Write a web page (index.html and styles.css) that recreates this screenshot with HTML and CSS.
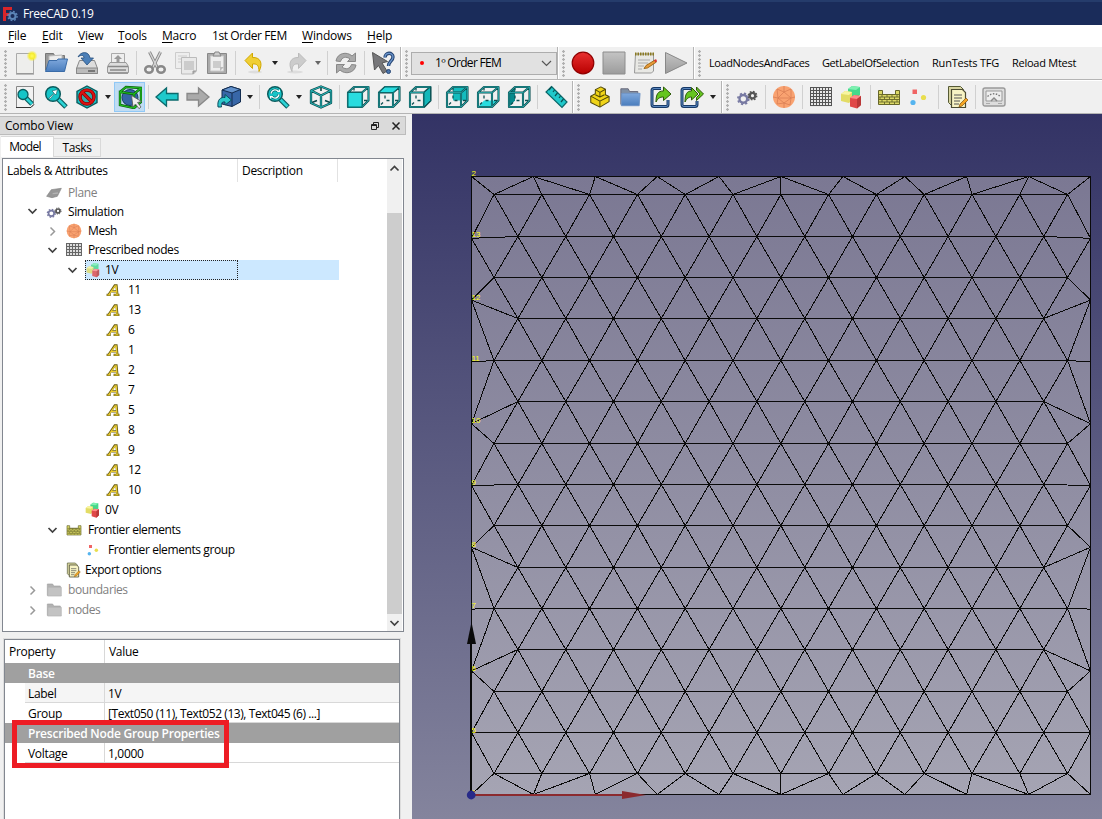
FILE: index.html
```html
<!DOCTYPE html>
<html lang="en">
<head>
<meta charset="utf-8">
<title>FreeCAD 0.19</title>
<link rel="stylesheet" href="styles.css">
</head>
<body>
<svg class="defs" aria-hidden="true">
  <defs>
    <linearGradient id="gTeal" x1="0" y1="0" x2="1" y2="1"><stop offset="0" stop-color="#34e0e2"/><stop offset="1" stop-color="#06989a"/></linearGradient>
    <linearGradient id="gBlue" x1="0" y1="0" x2="0" y2="1"><stop offset="0" stop-color="#7fa8dc"/><stop offset="1" stop-color="#4a7dbd"/></linearGradient>
    <linearGradient id="gGrey" x1="0" y1="0" x2="0" y2="1"><stop offset="0" stop-color="#c4c4c4"/><stop offset="1" stop-color="#9c9c9c"/></linearGradient>
    <linearGradient id="gRed" x1="0" y1="0" x2="0" y2="1"><stop offset="0" stop-color="#e83030"/><stop offset="1" stop-color="#b80000"/></linearGradient>
    <linearGradient id="gSky" x1="0" y1="0" x2="0" y2="1"><stop offset="0" stop-color="#333365"/><stop offset="1" stop-color="#84849d"/></linearGradient>
    <linearGradient id="gFace" x1="0" y1="0" x2="0" y2="1"><stop offset="0" stop-color="#7b7893"/><stop offset="1" stop-color="#a5a4b3"/></linearGradient>
    <radialGradient id="gSun"><stop offset="0" stop-color="#fffb60"/><stop offset=".5" stop-color="#f6ec30"/><stop offset="1" stop-color="#f6ec30" stop-opacity="0"/></radialGradient>
  </defs>
  <symbol id="new" viewBox="0 0 24 24"><path d="M3.500 2.500h17v20h-17z" fill="#eeeeec" stroke="#aaa"/><path d="M3 23h18" stroke="#888"/><circle cx="19" cy="5" r="5.500" fill="url(#gSun)"/></symbol>
  <symbol id="open" viewBox="0 0 24 24"><path d="M1.500 19V2.500h8l1 2h10V20z" fill="#999" stroke="#777"/><path d="M5 5l13-1v8H5z" fill="#eee" stroke="#bbb"/><path d="M1.500 20.500L5 9.500h8l1-1.500h9.500l-3 12.500z" fill="url(#gBlue)" stroke="#3b6ca8"/></symbol>
  <symbol id="save" viewBox="0 0 24 24"><path d="M4.500 9.500h15l3 8v5h-21v-5z" fill="#ddd" stroke="#888"/><path d="M1.500 17h21v5.500h-21z" fill="#bbb" stroke="#888"/><path d="M13 20h7" stroke="#777" stroke-width="2"/><path d="M3 6C6 0 14 0 15 7h3.500L12 14 6 7h3C9 4 6 3.500 3 6z" fill="#4b7fb8" stroke="#28507f" stroke-width=".8"/></symbol>
  <symbol id="print" viewBox="0 0 24 24"><path d="M5.500 13V2.500h13V13" fill="#eee" stroke="#aaa"/><path d="M12 4l4 4h-2.500v4h-3V8H8z" fill="#999"/><path d="M4 11.500h16l2.500 4v6h-21v-6z" fill="#ddd" stroke="#999"/><path d="M2 15.500h20M4 19h16" stroke="#888" stroke-width="1.500"/><path d="M2 22.500h20" stroke="#999"/></symbol>
  <symbol id="cut" viewBox="0 0 24 24"><path d="M6.500 1l8 16M17.500 1l-8 16" stroke="#888" stroke-width="3"/><path d="M6.500 1l8 16M17.500 1l-8 16" stroke="#d8d8d8" stroke-width="1.300"/><g fill="none" stroke="#888" stroke-width="2.500"><ellipse cx="6" cy="18.500" rx="3.800" ry="3.300"/><ellipse cx="18" cy="18.500" rx="3.800" ry="3.300"/></g></symbol>
  <symbol id="copy" viewBox="0 0 24 24"><path d="M1.500 1.500h14v16h-14z" fill="#eee" stroke="#ccc"/><path d="M4 5h9M4 8h9M4 11h9" stroke="#ccc"/><path d="M7.500 6.500h15V20l-3 3H7.500z" fill="#e9e9e9" stroke="#bbb"/><path d="M10 10h10v9H10z" fill="#ccc"/><path d="M19 23v-3h3" fill="#aaa" stroke="#999"/></symbol>
  <symbol id="paste" viewBox="0 0 24 24"><path d="M2.500 2.500h19v20h-19z" fill="#aaa" stroke="#888"/><path d="M5.500 5h13v15h-13z" fill="#eee" stroke="#ccc"/><path d="M8 10h8v7H8z" fill="#ccc"/><path d="M8 5l2-4h4l2 4z" fill="#ccc" stroke="#888"/><path d="M15 20v-4h4" fill="#bbb"/></symbol>
  <symbol id="undo" viewBox="0 0 24 24"><ellipse cx="13" cy="21" rx="7" ry="1.500" fill="#ddd"/><path d="M3 9.500L10.500 2v4.500C18 6 21.500 12 17 20.500c0-6-2-8-6.500-7.500v4.500z" fill="#f0cf35" stroke="#d1a800"/></symbol>
  <symbol id="redo" viewBox="0 0 24 24"><ellipse cx="10" cy="21" rx="8" ry="1.500" fill="#ddd"/><path d="M21 9.500L13.500 2v4.500C6 6 2.500 12 7 20.500c0-6 2-8 6.500-7.500v4.500z" fill="#ccc" stroke="#bbb"/></symbol>
  <symbol id="refresh" viewBox="0 0 24 24"><g fill="#aaa" stroke="#888"><path d="M2 10C3 2 13 0 18 5l3.500-3v8.500h-8L16 8C12 5 8 6 6.500 10.500z"/><path d="M22 14c-1 8-11 10-16 5l-3.500 3v-8.500h8L8 16c4 3 8 2 9.500-2.500z"/></g></symbol>
  <symbol id="help" viewBox="0 0 24 24"><path d="M1.500 1.500l15 9-5.500 1.500 5 8-4 2.500-4.500-8-4 4.500z" fill="#77777a" stroke="#555"/><path d="M14 6.500C14 1 22 1 22 6c0 4-4.500 4-4.500 9" fill="none" stroke="#274674" stroke-width="3.400"/><path d="M14 6.500C14 1 22 1 22 6c0 4-4.500 4-4.500 9" fill="none" stroke="#6a95cc" stroke-width="1.300"/><circle cx="17.500" cy="20.500" r="2" fill="#4a75ac" stroke="#274674"/></symbol>
  <symbol id="record" viewBox="0 0 24 24"><circle cx="12" cy="12" r="10.800" fill="url(#gRed)" stroke="#8f0000" stroke-width="1.200"/></symbol>
  <symbol id="stop" viewBox="0 0 24 24"><path d="M1 1h22v22H1z" fill="url(#gGrey)" stroke="#8c8c8c"/></symbol>
  <symbol id="notes" viewBox="0 0 24 24"><path d="M2.500 3h18v17l-2 2h-17z" fill="#e8e8e4" stroke="#999"/><path d="M2 3h19" stroke="#8a7a20" stroke-width="3" stroke-dasharray="1.500 1"/><path d="M5 9h12M5 12h10M5 15h6M5 18h4" stroke="#aaa"/><path d="M11 17.500l2-3L22 9l1.500 2-9 6z" fill="#e89a3a" stroke="#8f5902" stroke-width=".8"/><path d="M21 9.500l2-1.500 1 2-1.500 1.500z" fill="#d33"/></symbol>
  <symbol id="play" viewBox="0 0 24 24"><path d="M1.500 1.500L23 12 1.500 22.500z" fill="url(#gGrey)" stroke="#888"/></symbol>
  <symbol id="fitall" viewBox="0 0 24 24"><path d="M3.500 1.500h17v18l-3 3h-14z" fill="#f2f2f2" stroke="#888"/><path d="M3 22.500h15l3-3" stroke="#333" fill="none"/><path d="M13 13l6 6" stroke="#0b5c5e" stroke-width="5"/><path d="M13 13l6 6" stroke="#2cd3d5" stroke-width="2.600"/><circle cx="10" cy="9.500" r="5" fill="#16c5c8" stroke="#0b5c5e" stroke-width="1.300"/></symbol>
  <symbol id="fitsel" viewBox="0 0 24 24"><path d="M14 14l8 8" stroke="#0b5c5e" stroke-width="5"/><path d="M14 14l7.500 7.500" stroke="#2cd3d5" stroke-width="2.600"/><circle cx="9" cy="9" r="7.300" fill="#16c5c8" stroke="#0b5c5e" stroke-width="1.500"/><path d="M4.500 13.500L10 8 8 6l5.500-1.500L12 10l-1.500-1.500L6 14z" fill="#fff" stroke="#0b5c5e" stroke-width=".6"/></symbol>
  <symbol id="style" viewBox="0 0 24 24"><path d="M12 1l10 5.500v11L12 23 2 17.500v-11z" fill="#16c5c8" stroke="#0b5c5e" stroke-width="1.400"/><circle cx="12" cy="12" r="7" fill="#3aa" stroke="#800" stroke-width="3.500"/><path d="M7 7l10 10" stroke="#800" stroke-width="3.500"/><circle cx="12" cy="12" r="7" fill="none" stroke="#d11" stroke-width="2"/><path d="M7 7l10 10" stroke="#d11" stroke-width="2"/></symbol>
  <symbol id="bound" viewBox="0 0 24 24"><circle cx="12" cy="12.500" r="8" fill="#3565a5" stroke="#173963"/><g fill="none" stroke="#0a5c0a" stroke-width="2.400"><path d="M2 7l14 2v14L2 20zM2 7l6-5 15 1-7 6M23 3v14l-7 6"/></g><g fill="none" stroke="#21c021" stroke-width="1.200"><path d="M2 7l14 2v14L2 20zM2 7l6-5 15 1-7 6M23 3v14l-7 6"/></g><path d="M13.500 10.500l10 6-4 1 3.500 4.500-2 1.700-3.500-4.700-2.500 3z" fill="#eee" stroke="#555" stroke-width=".8"/></symbol>
  <symbol id="left" viewBox="0 0 24 24"><path d="M1 12L11.500 3v5.500H23v6.500H11.500v6z" fill="#1fc9cb" stroke="#0b6a6c" stroke-width="1.300"/></symbol>
  <symbol id="right" viewBox="0 0 24 24"><path d="M23 12L12.500 3v5.500H1v6.500h11.500v6z" fill="#aaa" stroke="#888" stroke-width="1.300"/></symbol>
  <symbol id="navcube" viewBox="0 0 24 24"><path d="M5 5l9-3.500 9.500 3V17L15 21.500 5 19z" fill="#3867a8" stroke="#132d50"/><path d="M5 5l10 3 8.500-3.500L14 1.500z" fill="#6392cc" stroke="#132d50"/><path d="M15 8v13.500" stroke="#132d50"/><path d="M1 22c-1-8 3-10 7-9.500v-3L14.500 15 8 20v-3c-3-.5-4 1-3.500 5z" fill="#2cc8cc" stroke="#0b4c5e"/></symbol>
  <symbol id="zoom" viewBox="0 0 24 24"><path d="M14 14l8 8" stroke="#0b5c5e" stroke-width="5"/><path d="M14 14l7.500 7.500" stroke="#2cd3d5" stroke-width="2.600"/><circle cx="9" cy="9" r="7.300" fill="#16c5c8" stroke="#0b5c5e" stroke-width="1.500"/><path d="M5 8.500C6 4 11 4 12.500 7M13 9.500C12 14 7 14 5.500 11" fill="none" stroke="#0b5c5e" stroke-width="2.600"/><path d="M5 8.500C6 4 11 4 12.500 7M13 9.500C12 14 7 14 5.500 11" fill="none" stroke="#eaffff" stroke-width="1.300"/><path d="M11 7h3V4zM7 11H4v3z" fill="#fff"/></symbol>
  <symbol id="iso" viewBox="0 0 24 24"><g fill="none" stroke="#0b4648" stroke-width="2.300" stroke-linejoin="round"><path d="M12 1.500l10 4v12.500l-10 4.500L2 18V5.500zM2 5.500l10 5 10-5M12 10.500v12"/><path d="M12 2v4M3 17.500l5-2M21 17.500l-5-2" stroke-width="1.600"/></g><g fill="none" stroke="#27b5b7" stroke-width="1.100"><path d="M12 1.500l10 4v12.500l-10 4.500L2 18V5.500zM2 5.500l10 5 10-5M12 10.500v12"/></g></symbol>
  <symbol id="wire" viewBox="0 0 24 24"><g fill="none" stroke="#0b5052" stroke-width="2.100" stroke-linejoin="round"><path d="M2 7.500h14V22H2zM2 7.500l6-5.500h14.500l-6.500 5.500M22.500 2v13.500L16 22"/><path d="M8 3v2.500M8 10.500v3M9.500 15.500h3M6 17.500l-2 2M18 15.500h3" stroke-width="1.300"/></g><path d="M2 7.500h14V22H2zM2 7.500l6-5.500h14.500l-6.500 5.500M22.500 2v13.500L16 22" fill="none" stroke="#27a5a7" stroke-width=".9"/></symbol>
  <symbol id="front" viewBox="0 0 24 24"><use href="#wire"/><path d="M2 7.500h14V22H2z" fill="#29dcdf" stroke="#0b6668"/></symbol>
  <symbol id="top" viewBox="0 0 24 24"><use href="#wire"/><path d="M2 7.500l6-5.500h14.500L16 7.500z" fill="#29dcdf" stroke="#0b6668"/></symbol>
  <symbol id="rside" viewBox="0 0 24 24"><use href="#wire"/><path d="M16 7.500L22.500 2v13.500L16 22z" fill="#14b8ba" stroke="#0b5658"/></symbol>
  <symbol id="rear" viewBox="0 0 24 24"><path d="M8 2h14.500v13.500H8z" fill="#14bcbe"/><use href="#wire"/></symbol>
  <symbol id="bottom" viewBox="0 0 24 24"><path d="M2 22l6-6.500h14.500L16 22z" fill="#29dcdf"/><use href="#wire"/></symbol>
  <symbol id="lside" viewBox="0 0 24 24"><path d="M2 7.500L8 2v13.500L2 22z" fill="#078a8c"/><use href="#wire"/></symbol>
  <symbol id="ruler" viewBox="0 0 24 24"><path d="M7.500 1.500L23 17l-5 5.500L2 7z" fill="#20c8ca" stroke="#0b6668" stroke-width="1.200"/><path d="M7.500 2L5 5M10.500 5L9 7M13.500 8L11 11M16.500 11L15 13M19.500 14L17 17" stroke="#0b5254" stroke-width="1.200"/></symbol>
  <symbol id="part" viewBox="0 0 24 24"><g fill="#f0d418" stroke="#504808" stroke-width="1.100" stroke-linejoin="round"><path d="M3 11l5-2.500V4l6-3 5 2.500v6l4 2V17l-10 6-10-5z"/><path d="M8 4l5 3v5l-5-2.500M13 7l6-3.500M13 12l5-2.500M3 11l10 5.500V23M13 16.500l10-5" fill="none"/></g></symbol>
  <symbol id="folder" viewBox="0 0 24 24"><path d="M2 20V3h8l1.500 3h9v13z" fill="#8090a5" stroke="#667"/><path d="M3 8h20l-1 13.500H2.500z" fill="url(#gBlue)" stroke="#6d93c5"/></symbol>
  <symbol id="link" viewBox="0 0 24 24"><path d="M12 3.500H5q-2 0-2 2v14q0 2 2 2h12q2 0 2-2V15" fill="none" stroke="#173a68" stroke-width="3"/><path d="M12 3.500H5q-2 0-2 2v14q0 2 2 2h12q2 0 2-2V15" fill="none" stroke="#5a86bd" stroke-width="1"/><path d="M7 17C7 9 9 6 14.500 6V2L22 9l-7.500 6.500V12C11 12 9 13 7 17z" fill="#65c51f" stroke="#2d5a08"/></symbol>
  <symbol id="links" viewBox="0 0 24 24"><path d="M11 3.500H4q-2 0-2 2v14q0 2 2 2h11q2 0 2-2V16" fill="none" stroke="#173a68" stroke-width="3"/><path d="M11 3.500H4q-2 0-2 2v14q0 2 2 2h11q2 0 2-2V16" fill="none" stroke="#5a86bd" stroke-width="1"/><path d="M5 17C5 9 7 6 11.500 6V2.500L18 9l-6.500 6V12C9 12 7 13 5 17zM16.500 2l7 7-7 6.500v-3L20 9l-3.500-4z" fill="#65c51f" stroke="#2d5a08"/></symbol>
  <symbol id="gears" viewBox="0 0 24 24"><g fill="none"><circle cx="8" cy="14" r="4.200" stroke="#7779a2" stroke-width="2.600"/><circle cx="8" cy="14" r="6" stroke="#7779a2" stroke-width="1.800" stroke-dasharray="2.400 2.310"/><circle cx="18" cy="10.500" r="3" stroke="#555" stroke-width="2.600"/><circle cx="18" cy="10.500" r="4.600" stroke="#555" stroke-width="1.500" stroke-dasharray="1.800 1.810"/></g></symbol>
  <symbol id="mesh" viewBox="0 0 24 24"><circle cx="12" cy="12" r="11" fill="#f9a270"/><path d="M5 4l7 3 7-3M12 1v6l-6 6 6 5 7-5-7-6M1 12l5 1-1 6 7-1 6 2 1-7 4-1M5 4l1 9M19 4v9M12 18v5M6 13h13" fill="none" stroke="#d97f55" stroke-width=".8"/></symbol>
  <symbol id="grid" viewBox="0 0 24 24"><path d="M1 2h22v20H1z" fill="#e8e8e8"/><path d="M1 2.500h22M1 5.500h22M1 8.500h22M1 11.500h22M1 14.500h22M1 17.500h22M1 20.500h22M1.500 2v19M4.500 2v19M7.500 2v19M10.500 2v19M13.500 2v19M16.500 2v19M19.500 2v19M22.500 2v19" stroke="#555" stroke-width="1"/></symbol>
  <symbol id="grid-small" viewBox="0 0 16 16"><path d="M0 1h16v13H0z" fill="#ddd"/><path d="M0 1.500h16M0 4.500h16M0 7.500h16M0 10.500h16M0 13.500h16M.5 1v13M3.500 1v13M6.500 1v13M9.500 1v13M12.500 1v13M15.500 1v13" stroke="#666"/></symbol>
  <symbol id="blocks" viewBox="0 0 24 24"><path d="M8 4l4-3 8 1v8l-4 3-8-2z" fill="#45d88a"/><path d="M8 4l8 1 4-3-8-1z" fill="#7df0b0"/><path d="M1 9l4-3 7 1v8l-3 3-8-2z" fill="#e3dc65"/><path d="M1 9l8 1 3-3-7-1z" fill="#f8f5a0"/><path d="M10 13l4-3 7 1v9l-4 3.500-7-2z" fill="#e04848"/><path d="M10 13l7 1 4-3-7-1z" fill="#ff8a8a"/><path d="M17 14l4-3v9l-4 3.500z" fill="#b93838"/></symbol>
  <symbol id="wall" viewBox="0 0 24 24"><path d="M1.500 5.500h4v4h13v-4h4v14h-21z" fill="#dbd866" stroke="#66662a"/><path d="M2 9.500h20M2 12h20M2 14.500h20M2 17h20M5 9.500V12M10 9.500V12M15 9.500V12M20 9.500V12M3 12v2.500M7.500 12v2.500M12.500 12v2.500M17.500 12v2.500M5 14.500V17M10 14.500V17M15 14.500V17M20 14.500V17M7.500 17v2M12.500 17v2M17.500 17v2" stroke="#66662a" stroke-width=".9"/></symbol>
  <symbol id="dots" viewBox="0 0 24 24"><path d="M4.500 4.500H9V9H4.500z" fill="#f06464"/><circle cx="15.500" cy="12.500" r="2.600" fill="#e9de4e"/><circle cx="5" cy="17.500" r="2.600" fill="#55b4ef"/></symbol>
  <symbol id="export" viewBox="0 0 24 24"><path d="M3.500 1.500h12l3 3V19l-2 1.500h-10l-3-3z" fill="#d8d5a0" stroke="#555a35"/><path d="M6.500 4.500h11l3 3v15h-14z" fill="#f7f3c3" stroke="#4c4c33" stroke-width="1.200"/><path d="M9 10h8M9 13h8M9 16h6M9 19h5" stroke="#555"/><path d="M14 22l1-3 6-6 2 2-6 6z" fill="#f5a623" stroke="#805010" stroke-width=".7"/></symbol>
  <symbol id="meter" viewBox="0 0 24 24"><rect x="1" y="3" width="22" height="18" rx="2" fill="#ddd" stroke="#999" stroke-width="1.400"/><path d="M4 6h16v10H4z" fill="#eee" stroke="#999"/><path d="M5.500 11.500Q12 6 18.500 11.500" fill="none" stroke="#777" stroke-width="1.400" stroke-dasharray="1.500 1.500"/><path d="M9 16l3-3 3 3" stroke="#888" fill="none" stroke-width="1.500"/><path d="M4 18.500h4M16 18.500h4" stroke="#aaa"/></symbol>
  <symbol id="plane" viewBox="0 0 24 24"><path d="M1 17L8 7l15-2-6 12-8 2z" fill="#8c8c8c" stroke="#777"/><path d="M10 13l8-1" stroke="#aaa" stroke-width="2"/></symbol>
  <symbol id="note" viewBox="0 0 24 24"><path d="M1 20.500h7M13 20.500h10M4.500 20L15 4h3l1.500 16M10 14.500h8" fill="none" stroke="#6a5c10" stroke-width="3.800"/><path d="M2 20.500h5M14 20.500h8M5 20L15.500 5h2l1.500 15M10 14.500h8" fill="none" stroke="#ecce32" stroke-width="2"/></symbol>
  <symbol id="gfolder" viewBox="0 0 24 24"><path d="M2 20V3h8l1.500 3h10v13z" fill="#aaa" stroke="#999"/><path d="M3 8h20v13H2.500z" fill="#bdbdbd" stroke="#aaa"/></symbol>
  <symbol id="down" viewBox="0 0 11 11"><path d="M1.500 3l4 4 4-4" fill="none" stroke="#404040" stroke-width="1.700"/></symbol>
  <symbol id="next" viewBox="0 0 11 11"><path d="M3.500 1.500l4 4-4 4" fill="none" stroke="#999" stroke-width="1.500"/></symbol>
</svg>

<header class="titlebar">
  <svg class="logo" viewBox="0 0 16 16"><path d="M1 1h9v3H4v3h4v3H4v5H1z" fill="#d9252a"/><circle cx="10.500" cy="10" r="3" fill="none" stroke="#5c85b8" stroke-width="2"/><circle cx="10.500" cy="10" r="4.600" fill="none" stroke="#5c85b8" stroke-width="1.400" stroke-dasharray="1.800 1.800"/></svg>
  <span>FreeCAD 0.19</span>
</header>
<nav class="menubar">
  <span class="m1"><u>F</u>ile</span><span class="m2"><u>E</u>dit</span><span class="m3"><u>V</u>iew</span><span class="m4"><u>T</u>ools</span><span class="m5"><u>M</u>acro</span><span class="m6">1st Order FEM</span><span class="m7"><u>W</u>indows</span><span class="m8"><u>H</u>elp</span>
</nav>

<div class="toolbar">
  <div class="group g-file"><i class="grip"></i>
    <b><svg><use href="#new"/></svg></b><b><svg><use href="#open"/></svg></b><b><svg><use href="#save"/></svg></b><b><svg><use href="#print"/></svg></b><i class="sep"></i>
    <b><svg><use href="#cut"/></svg></b><b><svg><use href="#copy"/></svg></b><b><svg><use href="#paste"/></svg></b><i class="sep"></i>
    <b><svg><use href="#undo"/></svg></b><i class="caret"></i><b><svg><use href="#redo"/></svg></b><i class="caret dim"></i><i class="sep"></i>
    <b><svg><use href="#refresh"/></svg></b><i class="sep"></i><b><svg><use href="#help"/></svg></b>
  </div>
  <div class="group g-bench"><i class="grip"></i>
    <div class="combo"><i class="bullet"></i><span>1º Order FEM</span><svg class="chev" viewBox="0 0 11 11"><path d="M1 3l4.500 4.500L10 3" fill="none" stroke="#555" stroke-width="1.200"/></svg></div>
  </div>
  <div class="group g-macro"><i class="grip"></i>
    <b><svg><use href="#record"/></svg></b><b><svg><use href="#stop"/></svg></b><b><svg><use href="#notes"/></svg></b><b><svg><use href="#play"/></svg></b>
  </div>
  <div class="group g-text"><i class="grip"></i><span class="t1">LoadNodesAndFaces</span><span class="t2">GetLabelOfSelection</span><span class="t3">RunTests TFG</span><span class="t4">Reload Mtest</span></div>
</div>
<div class="toolbar second">
  <div class="group g-view"><i class="grip"></i>
    <b><svg><use href="#fitall"/></svg></b><b><svg><use href="#fitsel"/></svg></b><b><svg><use href="#style"/></svg></b><i class="caret"></i><b class="on"><svg><use href="#bound"/></svg></b><i class="sep"></i>
    <b><svg><use href="#left"/></svg></b><b><svg><use href="#right"/></svg></b><b><svg><use href="#navcube"/></svg></b><i class="caret"></i><i class="sep"></i>
    <b><svg><use href="#zoom"/></svg></b><i class="caret"></i><b><svg><use href="#iso"/></svg></b><i class="sep"></i>
    <b><svg><use href="#front"/></svg></b><b><svg><use href="#top"/></svg></b><b><svg><use href="#rside"/></svg></b><i class="sep"></i>
    <b><svg><use href="#rear"/></svg></b><b><svg><use href="#bottom"/></svg></b><b><svg><use href="#lside"/></svg></b><i class="sep"></i><b><svg><use href="#ruler"/></svg></b>
  </div>
  <div class="group g-struct"><i class="grip"></i>
    <b><svg class="s22"><use href="#part"/></svg></b><b><svg class="s22"><use href="#folder"/></svg></b><b><svg><use href="#link"/></svg></b><b><svg><use href="#links"/></svg></b><i class="caret"></i>
  </div>
  <div class="group g-fem"><i class="grip"></i>
    <b><svg class="s22"><use href="#gears"/></svg></b><i class="sep"></i><b><svg><use href="#mesh"/></svg></b><i class="sep"></i><b><svg><use href="#grid"/></svg></b><b><svg><use href="#blocks"/></svg></b><i class="sep"></i>
    <b><svg><use href="#wall"/></svg></b><b><svg><use href="#dots"/></svg></b><i class="sep"></i><b><svg><use href="#export"/></svg></b><i class="sep"></i><b><svg><use href="#meter"/></svg></b>
  </div>
</div>

<main class="work">
  <aside class="dock">
    <div class="dock-title"><span>Combo View</span>
      <svg class="float" viewBox="0 0 10 10"><path d="M3.500 3V1.500h5v5H7M1.500 3.500h5v5h-5zM1.500 4.500h5" fill="none" stroke="#222"/></svg>
      <svg class="close" viewBox="0 0 10 10"><path d="M1.500 1.500l7 7M8.500 1.500l-7 7" stroke="#222" stroke-width="1.500"/></svg>
    </div>
    <div class="tabs"><span class="tab active">Model</span><span class="tab">Tasks</span></div>
    <section class="tree">
      <div class="tree-body">
        <div class="tree-head"><span class="c1">Labels &amp; Attributes</span><span class="c2">Description</span></div>
        <div class="row short l1 gray"><i class="slot"></i><svg><use href="#plane"/></svg><span>Plane</span></div>
        <div class="row short l1"><i class="slot"><svg><use href="#down"/></svg></i><svg><use href="#gears"/></svg><span>Simulation</span></div>
        <div class="row short l2"><i class="slot"><svg><use href="#next"/></svg></i><svg><use href="#mesh"/></svg><span>Mesh</span></div>
        <div class="row short l2"><i class="slot"><svg><use href="#down"/></svg></i><svg><use href="#grid-small"/></svg><span>Prescribed nodes</span></div>
        <div class="row l3 selected"><i class="slot"><svg><use href="#down"/></svg></i><div class="cell"><svg><use href="#blocks"/></svg><span>1V</span></div><i class="rest"></i></div>
        <div class="row l4"><i class="slot"></i><svg><use href="#note"/></svg><span>11</span></div>
        <div class="row l4"><i class="slot"></i><svg><use href="#note"/></svg><span>13</span></div>
        <div class="row l4"><i class="slot"></i><svg><use href="#note"/></svg><span>6</span></div>
        <div class="row l4"><i class="slot"></i><svg><use href="#note"/></svg><span>1</span></div>
        <div class="row l4"><i class="slot"></i><svg><use href="#note"/></svg><span>2</span></div>
        <div class="row l4"><i class="slot"></i><svg><use href="#note"/></svg><span>7</span></div>
        <div class="row l4"><i class="slot"></i><svg><use href="#note"/></svg><span>5</span></div>
        <div class="row l4"><i class="slot"></i><svg><use href="#note"/></svg><span>8</span></div>
        <div class="row l4"><i class="slot"></i><svg><use href="#note"/></svg><span>9</span></div>
        <div class="row l4"><i class="slot"></i><svg><use href="#note"/></svg><span>12</span></div>
        <div class="row l4"><i class="slot"></i><svg><use href="#note"/></svg><span>10</span></div>
        <div class="row l3 tight"><i class="slot"></i><svg><use href="#blocks"/></svg><span>0V</span></div>
        <div class="row l2"><i class="slot"><svg><use href="#down"/></svg></i><svg><use href="#wall"/></svg><span>Frontier elements</span></div>
        <div class="row l3"><i class="slot"></i><svg><use href="#dots"/></svg><span>Frontier elements group</span></div>
        <div class="row l2 tight"><i class="slot"></i><svg><use href="#export"/></svg><span>Export options</span></div>
        <div class="row l1 gray"><i class="slot"><svg><use href="#next"/></svg></i><svg><use href="#gfolder"/></svg><span>boundaries</span></div>
        <div class="row l1 gray"><i class="slot"><svg><use href="#next"/></svg></i><svg><use href="#gfolder"/></svg><span>nodes</span></div>
      </div>
      <div class="scroll"><svg viewBox="0 0 11 11"><path d="M1.500 7.500l4-4 4 4" fill="none" stroke="#404040" stroke-width="1.700"/></svg><i class="thumb"></i><svg><use href="#down"/></svg></div>
    </section>
    <section class="props">
      <div class="prow phead"><span>Property</span><span>Value</span></div>
      <div class="psec">Base</div>
      <div class="prow alt"><span>Label</span><span>1V</span></div>
      <div class="prow"><span>Group</span><span class="grp">[Text050 (11), Text052 (13), Text045 (6) ...]</span></div>
      <div class="psec">Prescribed Node Group Properties</div>
      <div class="prow"><span>Voltage</span><span>1,0000</span></div>
      <div class="callout"></div>
    </section>
  </aside>
  <svg class="view" viewBox="412 114 690 705">
    <rect x="412" y="114" width="690" height="705" fill="url(#gSky)"/>
    <rect x="471" y="176" width="620" height="619" fill="url(#gFace)"/>
    <path id="edges" fill="none" stroke="#0a0a0a" stroke-width="1" shape-rendering="crispEdges"/>
    <g class="nodes"><text x="471.500" y="176">2</text><text x="471.500" y="237">13</text><text x="471.500" y="299.500">12</text><text x="471.500" y="361">11</text><text x="471.500" y="423">10</text><text x="471.500" y="485">9</text><text x="471.500" y="547">8</text><text x="471.500" y="608">7</text><text x="471.500" y="671">6</text><text x="471.500" y="733">5</text><text x="471.500" y="795">1</text></g>
    <path d="M471 794V640" stroke="#0a0a0a" stroke-width="2"/><path d="M471.500 622l4.500 22h-9z" fill="#0a0a0a"/>
    <path d="M472 795h152" stroke="#8b2a2e" stroke-width="2"/><path d="M646 795l-24-4v8z" fill="#8b2a2e"/>
    <circle cx="471.200" cy="795" r="4.400" fill="#272a88"/>
  </svg>
</main>
<script src="mesh.js"></script>
</body>
</html>
```
FILE: mesh.js
```js
// Triangulated square: staggered interior rows stitched to evenly spaced boundary nodes.
const left = 471.5, right = 1090.5, top_ = 176.5, bottom = 794.5;
const stepX = 47.8, midX = 780.8;
const rowY = [194.5, 236.5, 277.5, 318.5, 360.5, 401.5, 443.5, 484.5, 525.5, 567.5, 608.5, 649.5, 691.5, 732.5, 773.5];
const rows = rowY.map((y, r) => {
  const count = r % 2 ? 12 : 13;
  const first = midX - stepX * (count - 1) / 2;
  return Array.from({ length: count }, (_, i) => [first + i * stepX, y]);
});
let d = `M${left} ${top_}H${right}V${bottom}H${left}Z`;
const line = (a, b) => { d += `M${a[0]} ${a[1]}L${b[0]} ${b[1]}`; };

rows.forEach((row, r) => {
  line(row[0], row[row.length - 1]);
  if (r === rows.length - 1) return;
  const wide = row.length === 13 ? row : rows[r + 1];
  const narrow = row.length === 13 ? rows[r + 1] : row;
  narrow.forEach((p, i) => { line(p, wide[i]); line(p, wide[i + 1]); });
});

const sideLinks = [[0], [0, 1, 2], [2, 3, 4], [4], [4, 5, 6], [6, 7, 8], [8, 9, 10], [10], [10, 11, 12], [12, 13, 14], [14]];
sideLinks.forEach((links, i) => {
  const y = top_ + i * (bottom - top_) / 10;
  links.forEach(r => {
    line([left, y], rows[r][0]);
    line([right, y], rows[r][rows[r].length - 1]);
  });
});

const capLinks = [[], [0, 1, 2], [2, 3], [3, 4], [4, 5], [5, 6, 7], [7, 8], [8, 9], [9, 10], [10, 11, 12], []];
capLinks.forEach((links, i) => {
  const x = left + i * (right - left) / 10;
  links.forEach(c => {
    line([x, top_], rows[0][c]);
    line([x, bottom], rows[14][c]);
  });
});
document.getElementById('edges').setAttribute('d', d);
```
FILE: styles.css
```css
* { box-sizing: border-box; }
body { margin: 0; width: 1102px; height: 819px; overflow: hidden; background: #f0f0f0; color: #000; font: 12px/16px "Open Sans", "Noto Sans", sans-serif; letter-spacing: -0.4px; white-space: nowrap; display: flex; flex-direction: column; }
.defs { position: absolute; width: 0; height: 0; }
i { font-style: normal; }
.titlebar { height: 25px; flex: none; background: #1a2c5a; border-top: 2px solid #253c6b; color: #fff; display: flex; align-items: center; padding-left: 2px; gap: 5px; }
.logo { width: 16px; height: 16px; }
.menubar { height: 22px; flex: none; background: #fff; display: flex; padding: 3px 0 0 8px; }
.menubar u { text-underline-offset: 2px; }
.m1 { width: 34px; } .m2 { width: 36px; } .m3 { width: 40px; } .m4 { width: 44px; } .m5 { width: 50px; } .m6 { width: 90px; } .m7 { width: 65px; }
.m1, .m2, .m3, .m4, .m5, .m7, .m8 { letter-spacing: -0.2px; }
.toolbar { height: 33px; flex: none; display: flex; border-bottom: 1px solid #b4b4b4; }
.toolbar.second { height: 34px; border-top: 1px solid #fff; }
.group { display: flex; align-items: center; flex: none; border-right: 1px solid #b4b4b4; box-shadow: 1px 0 #fff; }
.grip { width: 3px; height: 27px; margin: 0 2px 0 4px; flex: none; background: radial-gradient(circle at 1.500px 1.500px, #b0b0b0 1px, transparent 1.500px) 0 0 / 3px 4px; }
.group b { width: 31px; height: 30px; display: flex; align-items: center; justify-content: center; flex: none; }
.group b svg { width: 24px; height: 24px; }
.group b svg.s22 { width: 22px; height: 22px; }
.group b.on { background: #c0dcf3; border: 1px solid #90c8f6; }
.sep { width: 6px; height: 24px; flex: none; background: linear-gradient(#d0d0d0, #d0d0d0) 3px 0 / 1px 100% no-repeat; }
.caret { width: 12px; display: flex; justify-content: center; flex: none; }
.caret::after { content: ""; border: 3.500px solid transparent; border-top: 4px solid #222; border-bottom: 0; }
.caret.dim::after { border-top-color: #666; }
.g-file { width: 401px; } .g-bench { width: 157px; } .g-macro { width: 136px; } .g-text { border: 0; box-shadow: none; }
.g-view { width: 573px; } .g-struct { width: 149px; } .g-fem { border: 0; box-shadow: none; }
.g-struct .grip { margin-right: 3px; }
.combo { width: 146px; height: 23px; border: 1px solid #adadad; background: #e1e1e1; display: flex; align-items: center; padding: 0 4px 0 8px; letter-spacing: -0.700px; margin-left: 1px; }
.bullet { width: 4px; height: 4px; border-radius: 2px; background: #f00; margin-right: 11px; }
.chev { width: 11px; height: 11px; margin-left: auto; }
.g-text { font-size: 11px; letter-spacing: -0.400px; }
.t1 { width: 113px; margin-left: 6px; } .t2 { width: 110px; } .t3 { width: 80px; letter-spacing: -0.200px; } .t4 { letter-spacing: -0.250px; }
.work { flex: 1; display: flex; min-height: 0; }
.dock { width: 412px; flex: none; padding-top: 2px; display: flex; flex-direction: column; }
.dock-title { width: 406px; height: 19px; flex: none; background: #dadada; border: 1px solid #bcbcbc; border-left: 0; display: flex; align-items: center; padding: 0 4px 0 5px; letter-spacing: -0.200px; }
.float { width: 10px; height: 10px; margin-left: auto; margin-right: 11px; }
.close { width: 10px; height: 10px; }
.tabs { height: 23px; flex: none; display: flex; align-items: flex-end; padding: 0 0 1px 1px; }
.tab { width: 47px; height: 19px; border: 1px solid #d9d9d9; border-left: 0; text-align: center; line-height: 18px; }
.tab.active { width: 53px; height: 21px; background: #fff; border-bottom: 0; padding-right: 4px; line-height: 19px; letter-spacing: -0.700px; }
.tree { margin-left: 2px; width: 402px; height: 474px; flex: none; border: 1px solid #828790; background: #fff; display: flex; }
.tree-body { width: 384px; }
.tree-head { height: 24px; display: flex; line-height: 23px; letter-spacing: -0.300px; }
.tree-head span { border-right: 1px solid #e2e2e2; height: 23px; padding-left: 4px; }
.c1 { width: 235px; } .c2 { width: 100px; }
.row { height: 20px; display: flex; align-items: center; }
.row.short { height: 19.250px; }
.row > svg, .cell > svg { width: 16px; height: 16px; margin-right: 6px; flex: none; }
.slot { width: 19px; flex: none; display: flex; }
.slot svg { width: 11px; height: 11px; }
.l1 { padding-left: 24px; } .l2 { padding-left: 44px; } .l3 { padding-left: 64px; } .l4 { padding-left: 84px; }
.l4 { letter-spacing: -0.700px; }
.row.tight > svg { margin: 0 4px 0 -1px; }
.l4 > svg { width: 14px; height: 14px; margin-right: 8px; }
.gray { color: #808080; }
.gray > svg { opacity: .9; }
.cell { margin-left: -1px; width: 153px; height: 20px; display: flex; align-items: center; background: #cce8ff; border: 1px dotted #222; }
.cell > svg { margin-right: 4px; opacity: .8; width: 15px; }
.rest { width: 101px; height: 20px; background: #cce8ff; }
.scroll { width: 15px; background: #f0f0f0; display: flex; flex-direction: column; align-items: center; padding: 4px 0 3px; }
.scroll svg { width: 11px; height: 11px; flex: none; }
.thumb { width: 15px; height: 401px; background: #cdcdcd; margin: 39px 0 4px; flex: none; }
.props { margin: 7px 0 0 4px; width: 396px; height: 190px; flex: none; border: 1px solid #828790; background: #fff; position: relative; box-shadow: 0 0 0 1px #ddd; }
.prow { height: 20px; display: flex; margin-left: 20px; line-height: 21px; border-bottom: 1px solid #d8d8d8; letter-spacing: -0.300px; }
.prow span:first-child { width: 80px; padding-left: 3px; border-right: 1px solid #d8d8d8; }
.prow span:last-child { padding-left: 3px; }
.prow .grp { letter-spacing: -0.430px; }
.prow.phead { margin-left: 0; height: 23px; line-height: 24px; border-bottom: 0; }
.phead span:first-child { width: 100px; padding-left: 4px; }
.phead span:last-child { padding-left: 4px; }
.alt { background: #f5f5f5; }
.psec { height: 20px; line-height: 21px; background: #a0a0a0; color: #fff; font-weight: 600; padding-left: 23px; letter-spacing: -0.220px; }
.callout { position: absolute; left: 7px; top: 80px; width: 217px; height: 48px; border: 5px solid #ed1c24; }
.view { width: 690px; height: 705px; flex: none; }
.nodes { font: 8px "Liberation Sans", sans-serif; fill: #ffff10; letter-spacing: 0; }
```
